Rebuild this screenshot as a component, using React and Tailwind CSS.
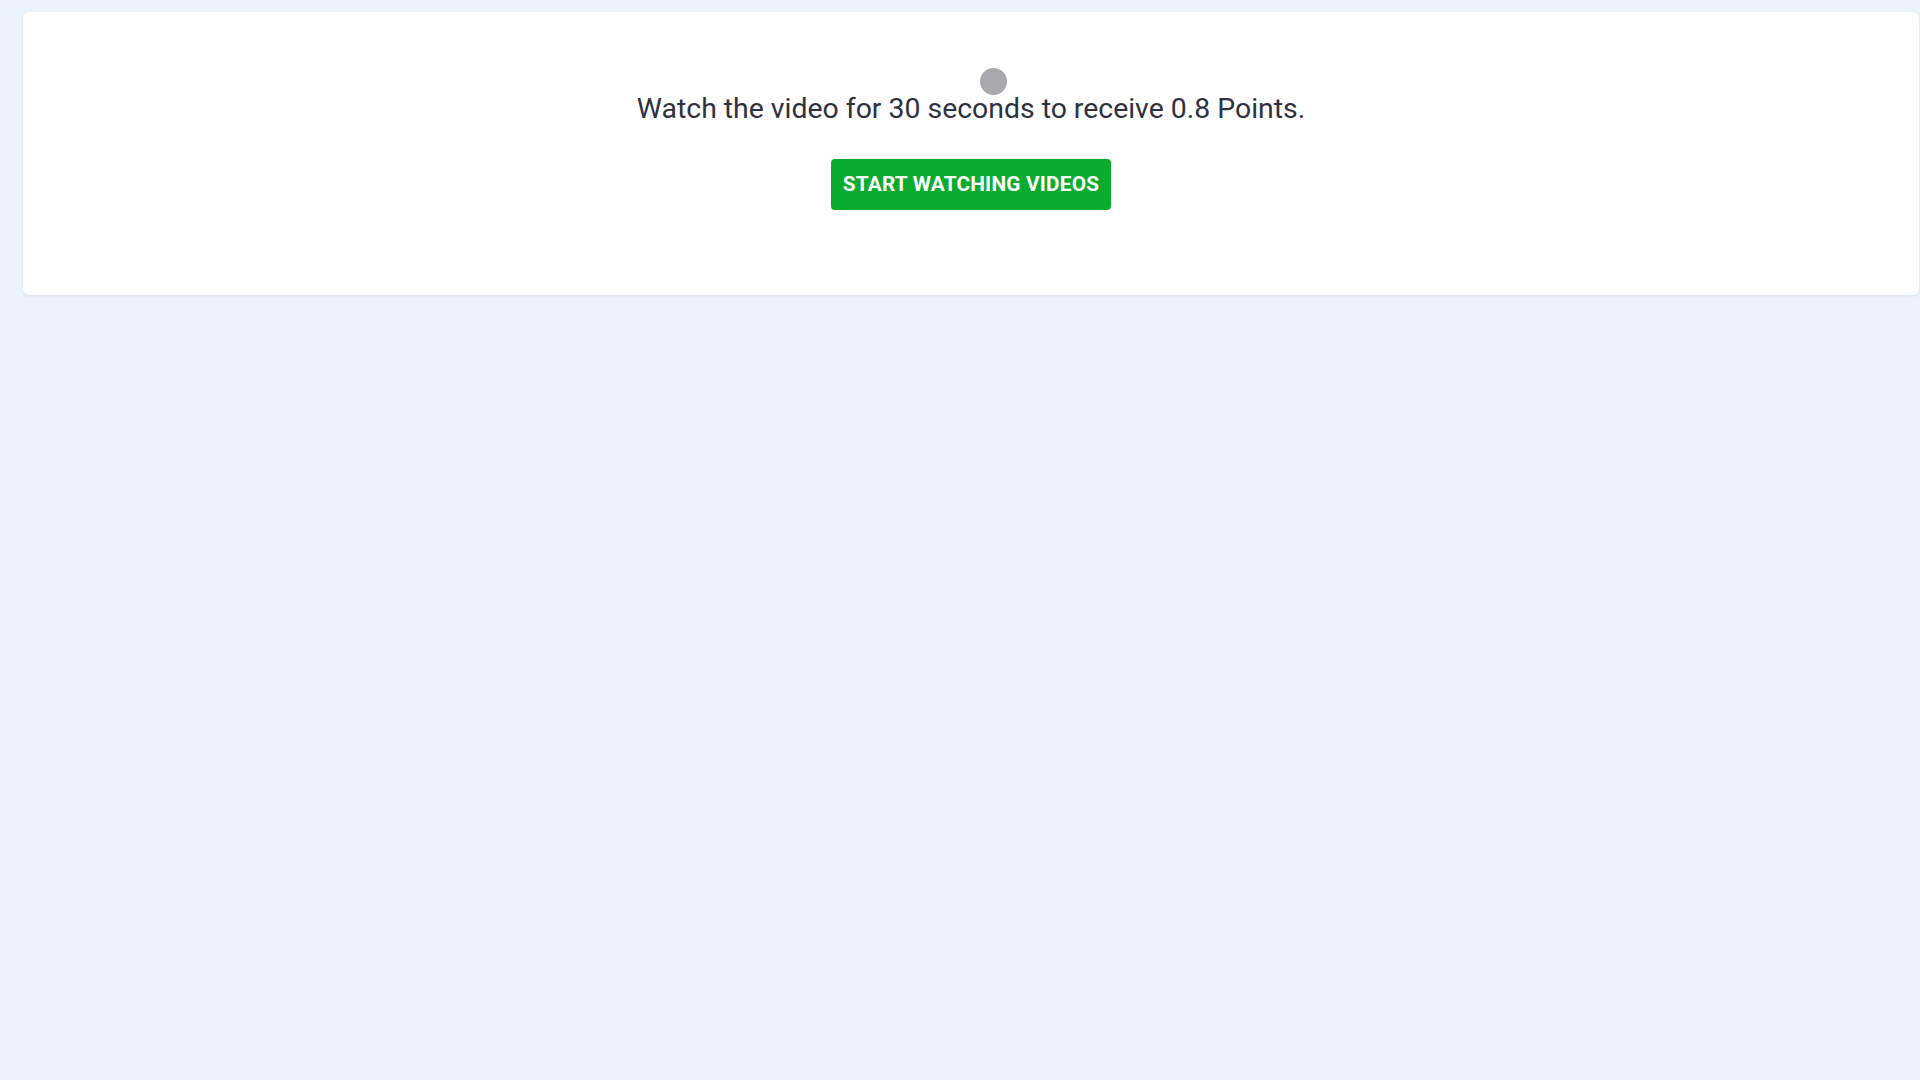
export default function App() {
  return (
    <div className="min-h-screen bg-[#ebf3fd] pt-[12px] pl-[23px] pr-[1px]" style={{ fontFamily: 'Roboto, "Noto Sans", sans-serif' }}>
      <div className="relative bg-white rounded-md shadow-[0_1px_3px_rgba(0,0,0,0.08)] h-[283px] flex flex-col items-center pt-[79px]">
        {/* cursor dot from the recording */}
        <div className="absolute left-[957px] top-[56px] w-[27px] h-[27px] rounded-full bg-[#a9a9ad]" />
        <p className="text-[28.4px] leading-[36px] text-[#2e3140]">Watch the video for 30 seconds to receive 0.8 Points.</p>
        <button className="mt-[32px] h-[51px] px-[12px] rounded-[4px] bg-[#0aab2f] text-white font-bold text-[20.8px] tracking-[0.2px]">
          START WATCHING VIDEOS
        </button>
      </div>
    </div>
  )
}
